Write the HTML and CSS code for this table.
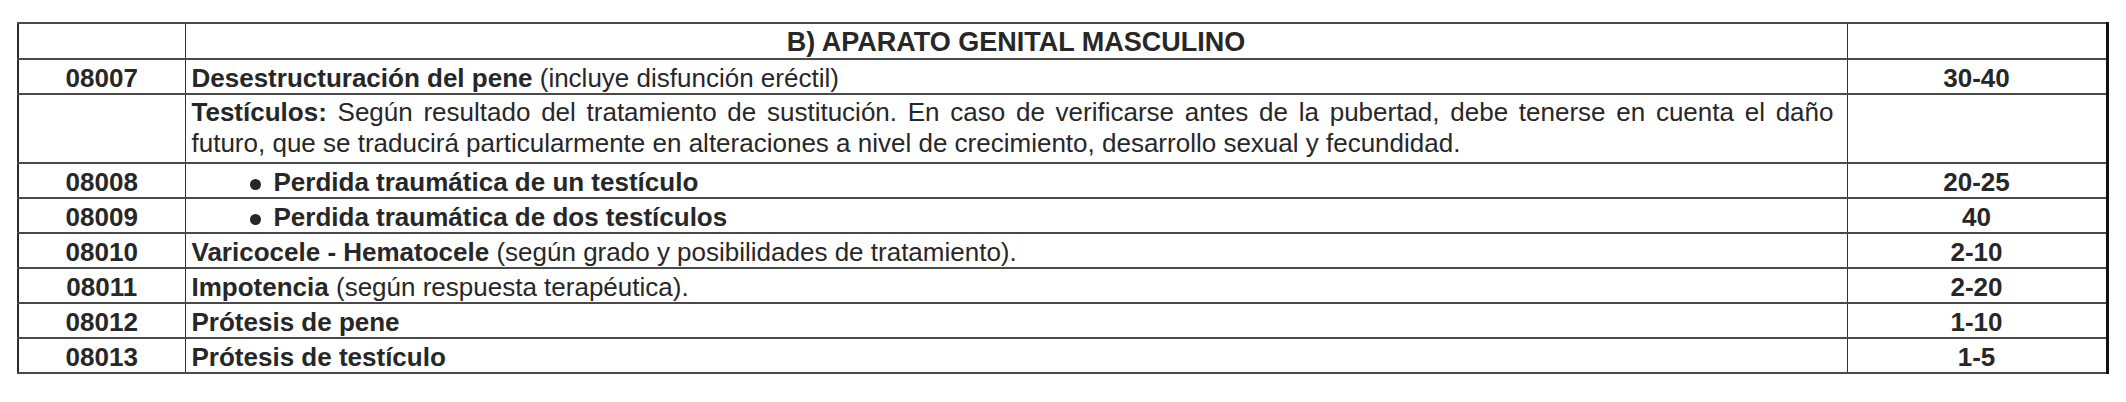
FILE: index.html
```html
<!DOCTYPE html>
<html lang="es">
<head>
<meta charset="utf-8">
<title>B) Aparato genital masculino</title>
<link rel="stylesheet" href="styles.css">
</head>
<body>
<table class="baremo">
  <colgroup>
    <col class="c-code">
    <col class="c-desc">
    <col class="c-val">
  </colgroup>
  <tr class="r-head">
    <td></td>
    <td class="title">B) APARATO GENITAL MASCULINO</td>
    <td></td>
  </tr>
  <tr class="r-item">
    <td class="code">08007</td>
    <td class="desc"><b>Desestructuración del pene</b> (incluye disfunción eréctil)</td>
    <td class="val">30-40</td>
  </tr>
  <tr class="r-para">
    <td></td>
    <td class="desc para"><span class="line l1"><b>Testículos:</b> Según resultado del tratamiento de sustitución. En caso de verificarse antes de la pubertad, debe tenerse en cuenta el daño</span><span class="line">futuro, que se traducirá particularmente en alteraciones a nivel de crecimiento, desarrollo sexual y fecundidad.</span></td>
    <td></td>
  </tr>
  <tr class="r-item">
    <td class="code">08008</td>
    <td class="desc sub"><b><span class="dot"></span>Perdida traumática de un testículo</b></td>
    <td class="val">20-25</td>
  </tr>
  <tr class="r-item">
    <td class="code">08009</td>
    <td class="desc sub"><b><span class="dot"></span>Perdida traumática de dos testículos</b></td>
    <td class="val">40</td>
  </tr>
  <tr class="r-item">
    <td class="code">08010</td>
    <td class="desc"><b>Varicocele - Hematocele</b> (según grado y posibilidades de tratamiento).</td>
    <td class="val">2-10</td>
  </tr>
  <tr class="r-item">
    <td class="code">08011</td>
    <td class="desc"><b>Impotencia</b> (según respuesta terapéutica).</td>
    <td class="val">2-20</td>
  </tr>
  <tr class="r-item">
    <td class="code">08012</td>
    <td class="desc"><b>Prótesis de pene</b></td>
    <td class="val">1-10</td>
  </tr>
  <tr class="r-item">
    <td class="code">08013</td>
    <td class="desc"><b>Prótesis de testículo</b></td>
    <td class="val">1-5</td>
  </tr>
</table>
</body>
</html>
```
FILE: styles.css
```css
html, body {
  margin: 0;
  padding: 0;
  background: #ffffff;
}

body {
  padding: 22px 0 0 17px;
  font-family: "Liberation Sans", Arial, sans-serif;
  color: #272727;
}

.baremo {
  border-collapse: collapse;
  table-layout: fixed;
  width: 2089px;
  border-top: 2px solid #333;
  border-left: 2px solid #2a2a2a;
  border-bottom: 2px solid #2a2a2a;
  border-right: 3px solid #111;
  font-size: 26px;
  line-height: 28px;
}

.c-code { width: 167px; }
.c-desc { width: 1662px; }
.c-val { width: 260px; }

.baremo tr { height: 35px; }
.baremo tr.r-head { height: 36px; }
.baremo tr.r-para { height: 69px; }

.baremo td {
  border-top: 2px solid #4a4a4a;
  border-bottom: 2px solid #4a4a4a;
  border-left: 1px solid #333;
  border-right: 1px solid #333;
  padding: 2px 6px 0 6px;
  vertical-align: middle;
}

.baremo td.title {
  text-align: center;
  font-weight: bold;
  font-size: 27px;
}

.baremo td.code,
.baremo td.val {
  text-align: center;
  font-weight: bold;
}

.baremo td.desc {
  text-align: left;
  white-space: nowrap;
}

.baremo td.para {
  padding: 1px 13px 2px 6px;
  line-height: 31px;
}

.line {
  display: block;
}

.l1 {
  text-align: justify;
  text-align-last: justify;
}

.baremo td.sub {
  padding-left: 64px;
}

.dot {
  display: inline-block;
  width: 11px;
  height: 11px;
  border-radius: 50%;
  background: #272727;
  margin-right: 13px;
  vertical-align: 1px;
}
```
